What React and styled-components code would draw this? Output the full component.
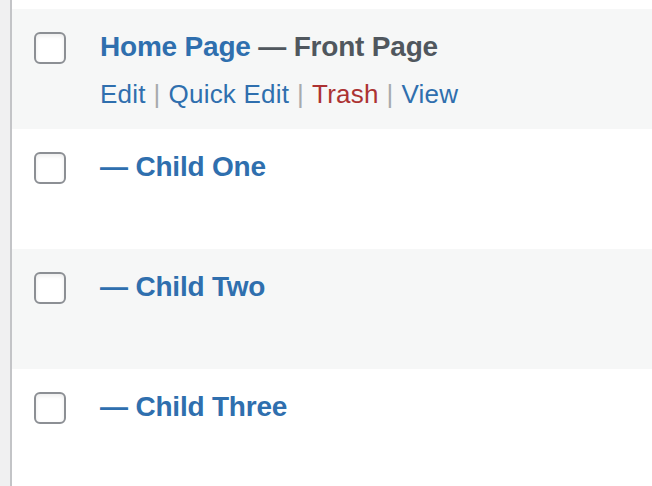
import React from 'react';
import styled, { createGlobalStyle } from 'styled-components';

const GlobalStyle = createGlobalStyle`
  html, body { margin: 0; padding: 0; background: #fff; }
  body { font-family: "Liberation Sans", Arial, sans-serif; }
`;

const Screen = styled.div`
  display: flex;
  height: 486px;
  overflow: hidden;
`;

const Gutter = styled.div`
  width: 10px;
  flex-shrink: 0;
  background: #f0f0f1;
  border-right: 2px solid #c3c4c7;
`;

const List = styled.div`
  flex: 1;
  padding-top: 9px;
  background: #fff;
`;

const Row = styled.div`
  display: flex;
  align-items: flex-start;
  height: 120px;
  box-sizing: border-box;
  padding: 23px 0 0 22px;
  background: ${p => (p.$alt ? '#f6f7f7' : '#fff')};
`;

const Check = styled.span`
  width: 32px;
  height: 32px;
  box-sizing: border-box;
  flex-shrink: 0;
  border: 2px solid #8c8f94;
  border-radius: 6px;
  background: #fff;
  box-shadow: inset 0 2px 4px rgba(0, 0, 0, 0.08);
`;

const Body = styled.div`
  margin-left: 34px;
  margin-top: -5px;
`;

const Title = styled.div`
  font-size: 28px;
  line-height: 39px;
  font-weight: 700;
  letter-spacing: -0.2px;
  color: #50575e;
  white-space: nowrap;
`;

const TitleLink = styled.a`
  color: #2f6fae;
  text-decoration: none;
`;

const Actions = styled.div`
  margin-top: 9px;
  font-size: 26px;
  line-height: 39px;
  letter-spacing: 0.2px;
  color: #a7aaad;
  white-space: nowrap;
`;

const Action = styled.a`
  color: ${p => (p.$danger ? '#ac3232' : '#2f6fae')};
  text-decoration: none;
`;

const Sep = styled.span`
  color: #a7aaad;
  margin: 0 8px;
`;

const pages = [
  { title: 'Home Page', state: 'Front Page', actions: true },
  { title: '— Child One' },
  { title: '— Child Two' },
  { title: '— Child Three' },
];

export default function App() {
  return (
    <>
      <GlobalStyle />
      <Screen>
        <Gutter />
        <List>
          {pages.map((p, i) => (
            <Row key={p.title} $alt={i % 2 === 0}>
              <Check />
              <Body>
                <Title>
                  <TitleLink href="#">{p.title}</TitleLink>
                  {p.state && <> — {p.state}</>}
                </Title>
                {p.actions && (
                  <Actions>
                    <Action href="#">Edit</Action>
                    <Sep>|</Sep>
                    <Action href="#">Quick Edit</Action>
                    <Sep>|</Sep>
                    <Action href="#" $danger>Trash</Action>
                    <Sep>|</Sep>
                    <Action href="#">View</Action>
                  </Actions>
                )}
              </Body>
            </Row>
          ))}
        </List>
      </Screen>
    </>
  );
}
